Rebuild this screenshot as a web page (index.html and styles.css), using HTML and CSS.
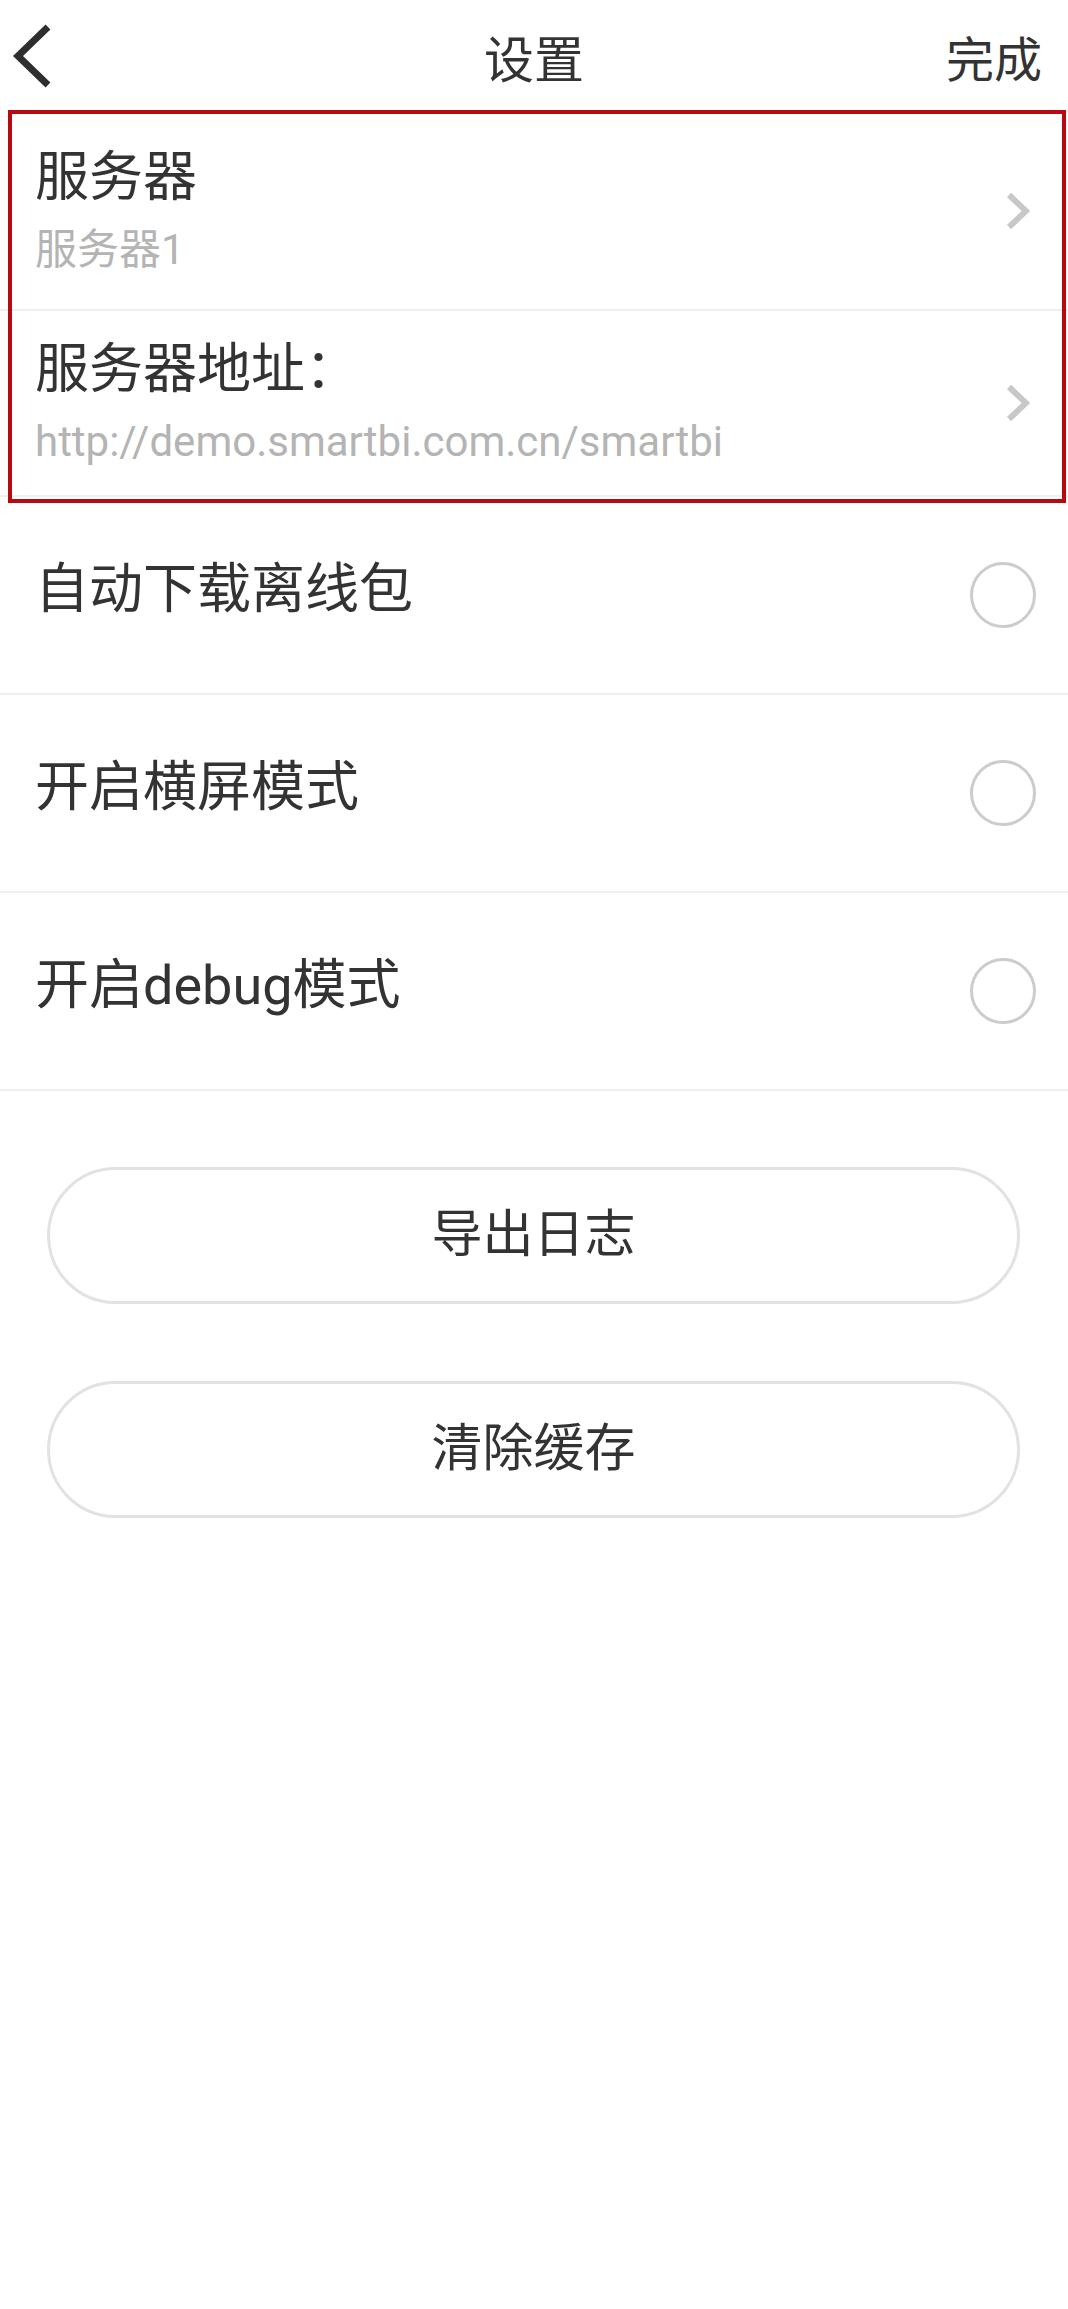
FILE: index.html
```html
<!DOCTYPE html>
<html lang="zh-CN">
<head>
    <meta charset="UTF-8">
    <meta name="viewport" content="width=device-width, initial-scale=1.0">
    <title>设置</title>
    <link rel="stylesheet" href="styles.css">
</head>
<body>

    <header class="topbar">
        <div class="back">
            <svg width="40" height="64" viewBox="0 0 40 64">
                <polyline points="36,3 6,32 36,61" fill="none" stroke="#2e2e2e" stroke-width="7"></polyline>
            </svg>
        </div>
        <h1 class="title">设置</h1>
        <div class="done">完成</div>
    </header>

    <div class="server-group">
        <div class="row row-server">
            <div class="row-text">
                <div class="label">服务器</div>
                <div class="sub">服务器1</div>
            </div>
            <svg class="chevron" width="24" height="38" viewBox="0 0 24 38">
                <polyline points="3,3 20,19 3,35" fill="none" stroke="#c8c8c8" stroke-width="6"></polyline>
            </svg>
        </div>
        <div class="row row-address">
            <div class="row-text">
                <div class="label">服务器地址：</div>
                <div class="sub">http://demo.smartbi.com.cn/smartbi</div>
            </div>
            <svg class="chevron" width="24" height="38" viewBox="0 0 24 38">
                <polyline points="3,3 20,19 3,35" fill="none" stroke="#c8c8c8" stroke-width="6"></polyline>
            </svg>
        </div>
    </div>

    <div class="row">
        <div class="label">自动下载离线包</div>
        <span class="radio"></span>
    </div>
    <div class="row">
        <div class="label">开启横屏模式</div>
        <span class="radio"></span>
    </div>
    <div class="row">
        <div class="label">开启debug模式</div>
        <span class="radio"></span>
    </div>

    <div class="actions">
        <button class="pill">导出日志</button>
        <button class="pill">清除缓存</button>
    </div>

</body>
</html>
```

FILE: styles.css
```css
/* Settings page */
body {
    font-family: Roboto, "Noto Sans CJK SC", sans-serif;
    margin: 0;
    padding: 0;
    background: #fff;
    color: #333;
}

.topbar {
    height: 112px;
    display: grid;
    grid-template-columns: 1fr auto 1fr;
    align-items: center;
}

.back {
    padding-left: 12px;
    display: flex;
    align-items: center;
}

.title {
    margin: 0;
    font-size: 50px;
    font-weight: normal;
    color: #333;
}

.done {
    justify-self: end;
    padding-right: 26px;
    font-size: 48px;
}

.server-group {
    position: relative;
}

/* red highlight frame around the server settings */
.server-group::after {
    content: '';
    position: absolute;
    left: 8px;
    right: 2px;
    top: -2px;
    bottom: -6px;
    border: 4px solid #b70a10;
    pointer-events: none;
}

.row {
    height: 196px;
    display: flex;
    align-items: center;
    justify-content: space-between;
    padding: 0 32px 0 35px;
    border-bottom: 2px solid #f0f0f0;
}

.row > .label {
    margin-bottom: 10px;
}

.row-server {
    height: 197px;
}

.row-address {
    height: 184px;
}

.row-text {
    display: flex;
    flex-direction: column;
    gap: 14px;
}

.label {
    font-size: 54px;
    line-height: 1.2;
    color: #333;
}

.sub {
    font-size: 42px;
    line-height: 1.2;
    color: #b4b4b4;
}

.chevron {
    margin-right: 6px;
}

.radio {
    width: 60px;
    height: 60px;
    border: 3px solid #cccccc;
    border-radius: 50%;
}

.actions {
    display: flex;
    flex-direction: column;
    gap: 77px;
    padding: 76px 48px 0 47px;
}

.pill {
    height: 137px;
    padding-bottom: 12px;
    border: 3px solid #e2e2e2;
    border-radius: 70px;
    background: #fff;
    font-family: Roboto, "Noto Sans CJK SC", sans-serif;
    font-size: 51px;
    color: #333;
}
```
